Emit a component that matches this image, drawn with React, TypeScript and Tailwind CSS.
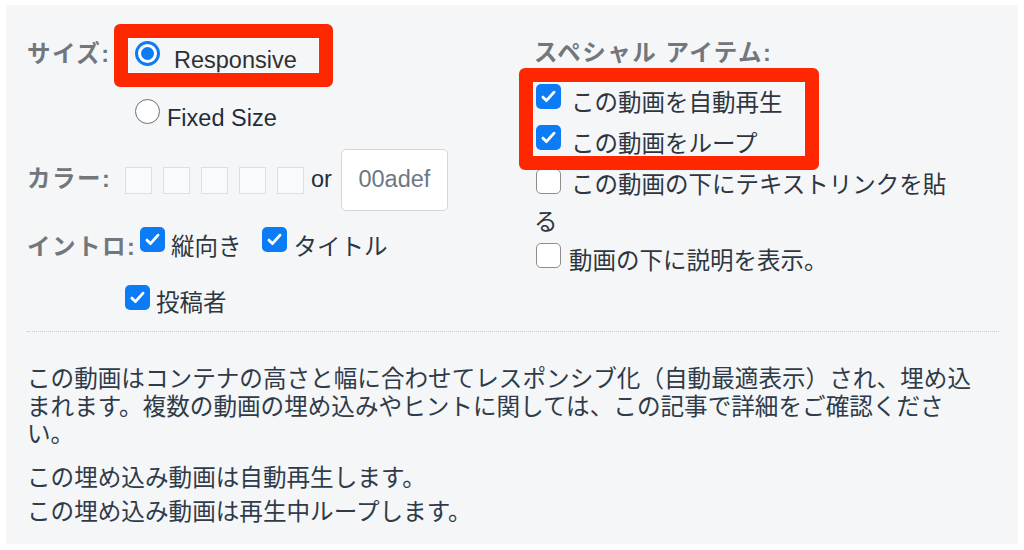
function CheckBox({ checked, className = "" }: { checked?: boolean; className?: string }) {
  if (checked) {
    return (
      <span className={"inline-flex h-[25px] w-[25px] shrink-0 items-center justify-center rounded-[5px] bg-[#0b7bf6] " + className}>
        <svg viewBox="0 0 24 24" className="h-[19px] w-[19px]" fill="none" stroke="white" strokeWidth={3.6} strokeLinecap="round" strokeLinejoin="round">
          <path d="M5 12.8l4.4 4.4L19 6.5" />
        </svg>
      </span>
    );
  }
  return <span className={"inline-block h-[25px] w-[25px] shrink-0 rounded-[5px] border-[1.5px] border-[#8d8d8d] bg-white " + className} />;
}

function Radio({ checked, className = "" }: { checked?: boolean; className?: string }) {
  if (checked) {
    return (
      <span className={"flex h-[25px] w-[25px] shrink-0 items-center justify-center rounded-full border-[3px] border-[#0b7bf6] bg-white " + className}>
        <span className="h-[13px] w-[13px] rounded-full bg-[#0b7bf6]" />
      </span>
    );
  }
  return <span className={"h-[25px] w-[25px] shrink-0 rounded-full border-[1.5px] border-[#6e6e6e] bg-white " + className} />;
}

export default function App() {
  return (
    <div className="relative h-[550px] w-[1024px] overflow-hidden bg-white font-['Liberation_Sans','Noto_Sans_CJK_JP',sans-serif] text-[23.5px]">
      <div className="ml-[6px] mt-[5px] h-[539px] w-[1012px] bg-[#f5f6f8] pl-[21px] pt-[27px]">
        <div className="flex">
          {/* left column */}
          <div className="w-[507px]">
            <div className="flex items-start">
              <div className="mt-[2px] h-[40px] w-[108px] font-bold leading-[40px] tracking-[1.5px] text-[#72777c]">サイズ:</div>
              <div className="flex flex-col gap-[20px]">
                <div className="flex h-[40px] items-start">
                  <Radio checked className="mt-[9px]" />
                  <span className="ml-[14px] mt-[8px] leading-[40px] text-[#303030]">Responsive</span>
                </div>
                <div className="flex h-[40px] items-start">
                  <Radio className="mt-[7px]" />
                  <span className="ml-[7px] mt-[6px] leading-[40px] text-[#1f2d3b]">Fixed Size</span>
                </div>
              </div>
            </div>

            <div className="mt-[17px] flex h-[62px] items-center">
              <div className="w-[98px] font-bold tracking-[1.5px] text-[#72777c]">カラー:</div>
              <div className="flex gap-[11px]">
                <span className="h-[27px] w-[27px] border-[1.5px] border-[#dde0e3] bg-[#f9fafb]" />
                <span className="h-[27px] w-[27px] border-[1.5px] border-[#dde0e3] bg-[#f9fafb]" />
                <span className="h-[27px] w-[27px] border-[1.5px] border-[#dde0e3] bg-[#f9fafb]" />
                <span className="h-[27px] w-[27px] border-[1.5px] border-[#dde0e3] bg-[#f9fafb]" />
                <span className="h-[27px] w-[27px] border-[1.5px] border-[#dde0e3] bg-[#f9fafb]" />
              </div>
              <span className="ml-[7px] text-[#1f2d3b]">or</span>
              <div className="ml-[9px] flex h-[62px] w-[107px] items-center justify-center rounded-[5px] border border-[#d3d6da] bg-white text-[#6c7886]">
                00adef
              </div>
            </div>

            <div className="mt-[16px] flex items-start">
              <div className="mt-[2px] w-[113px] font-bold leading-[36px] tracking-[1.5px] text-[#72777c]">イントロ:</div>
              <CheckBox checked />
              <span className="ml-[6px] mt-[2px] leading-[36px] text-[#2e3640]">縦向き</span>
              <CheckBox checked className="ml-[20px]" />
              <span className="ml-[7px] mt-[2px] leading-[36px] text-[#2e3640]">タイトル</span>
            </div>
            <div className="mt-[20px] flex items-start pl-[98px]">
              <CheckBox checked />
              <span className="ml-[6px] leading-[36px] text-[#2e3640]">投稿者</span>
            </div>
          </div>

          {/* right column */}
          <div className="w-[426px]">
            <div className="mt-[1px] h-[40px] font-bold leading-[40px] tracking-[1.5px] text-[#72777c]">スペシャル アイテム:</div>
            <div className="text-[#2e3640]">
              <div className="mt-[11px] flex items-start">
                <CheckBox checked className="ml-[2px]" />
                <span className="ml-[10px] mt-[1px] leading-[36px]">この動画を自動再生</span>
              </div>
              <div className="mt-[4px] flex items-start">
                <CheckBox checked className="ml-[2px]" />
                <span className="ml-[10px] mt-[1px] leading-[36px]">この動画をループ</span>
              </div>
              <div className="mt-[4.5px] leading-[37px]">
                <CheckBox className="ml-[2px] mr-[10px] align-[-1px]" />
                この動画の下にテキストリンクを貼る
              </div>
              <div className="mt-[2.5px] flex items-start">
                <CheckBox className="ml-[2px]" />
                <span className="ml-[8px] leading-[36px]">動画の下に説明を表示。</span>
              </div>
            </div>
          </div>
        </div>

        <div className="mt-[10px] w-[972px] border-t border-dotted border-[#c6cacf]" />

        <div className="mt-[34px] w-[955px] text-[23.6px] leading-[27.5px] text-[#2f3b48]">
          <p>この動画はコンテナの高さと幅に合わせてレスポンシブ化（自動最適表示）され、埋め込まれます。複数の動画の埋め込みやヒントに関しては、この記事で詳細をご確認ください。</p>
          <p className="mt-[16px]">この埋め込み動画は自動再生します。</p>
          <p className="mt-[7px]">この埋め込み動画は再生中ループします。</p>
        </div>
      </div>

      {/* red highlight boxes */}
      <div className="absolute left-[114px] top-[24px] h-[63px] w-[219px] rounded-[6px] border-[14px] border-[#ff2700]">
        <div className="h-full w-full border border-white/70" />
      </div>
      <div className="absolute left-[519px] top-[68px] h-[102px] w-[300px] rounded-[6px] border-[14px] border-[#ff2700]">
        <div className="h-full w-full border border-white/70" />
      </div>
    </div>
  );
}
